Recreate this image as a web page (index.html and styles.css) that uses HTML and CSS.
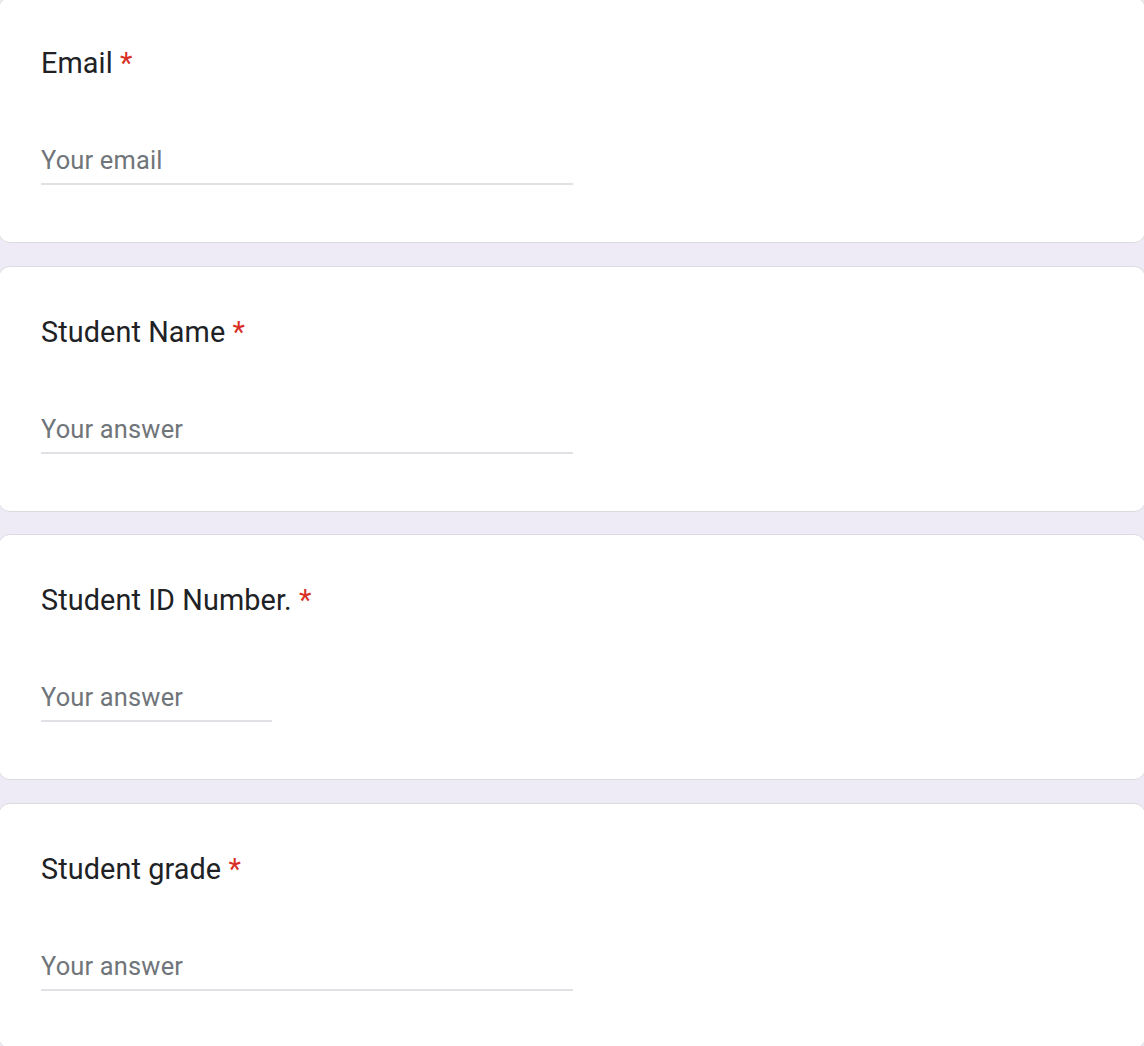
FILE: index.html
```html
<!DOCTYPE html>
<html lang="en">
<head>
<meta charset="utf-8">
<title>Form</title>
<link rel="stylesheet" href="styles.css">
</head>
<body>
<div class="form">
  <div class="card">
    <div class="q-title">Email<span class="req"> *</span></div>
    <div class="input"><span class="placeholder">Your email</span></div>
  </div>
  <div class="card">
    <div class="q-title">Student Name<span class="req"> *</span></div>
    <div class="input"><span class="placeholder">Your answer</span></div>
  </div>
  <div class="card">
    <div class="q-title">Student ID Number.<span class="req"> *</span></div>
    <div class="input short"><span class="placeholder">Your answer</span></div>
  </div>
  <div class="card">
    <div class="q-title">Student grade<span class="req"> *</span></div>
    <div class="input"><span class="placeholder">Your answer</span></div>
  </div>
</div>
</body>
</html>
```
FILE: styles.css
```css
html, body {
  margin: 0;
  padding: 0;
  background: #eeebf6;
  font-family: Roboto, "Liberation Sans", Arial, sans-serif;
  overflow: hidden;
}
.form {
  display: flex;
  flex-direction: column;
  gap: 22.6px;
  margin: -3px -2px 0 -2px;
}
.card {
  background: #ffffff;
  border: 1px solid #dadce0;
  border-radius: 12px;
  padding: 44px 42px 57px 42px;
  display: flex;
  flex-direction: column;
  gap: 58px;
}
.q-title {
  font-size: 28.8px;
  line-height: 42px;
  color: #202124;
  letter-spacing: 0.1px;
}
.req {
  color: #d93025;
}
.input {
  width: 532px;
  padding-bottom: 5px;
  border-bottom: 2px solid #e0e1e4;
  font-size: 25.4px;
  line-height: 36px;
}
.input.short {
  width: 231px;
}
.placeholder {
  color: #70757a;
  letter-spacing: 0.2px;
}
```
